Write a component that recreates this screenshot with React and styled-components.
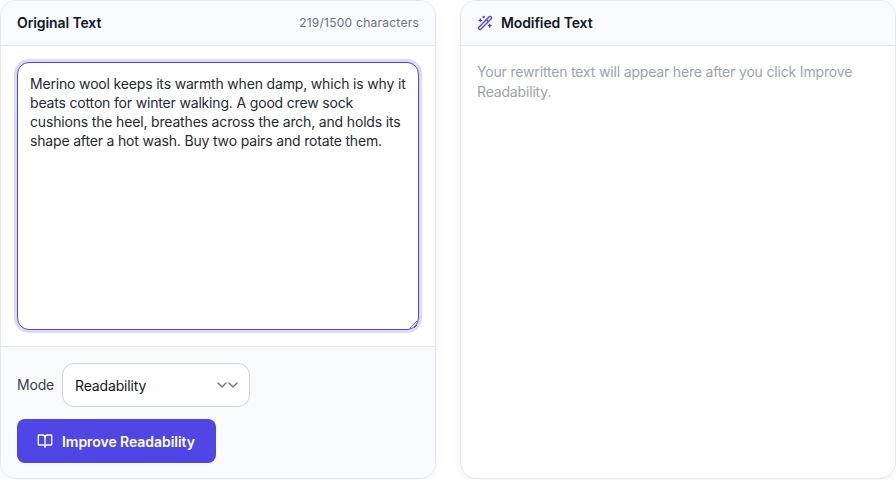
import React from "react";
import styled, { createGlobalStyle } from "styled-components";
import { BookOpen, ChevronDown, WandSparkles } from "lucide-react";

const sampleText =
  "Merino wool keeps its warmth when damp, which is why it beats cotton for winter walking. A good crew sock cushions the heel, breathes across the arch, and holds its shape after a hot wash. Buy two pairs and rotate them.";

const GlobalStyle = createGlobalStyle`
  html, body {
    margin: 0;
    padding: 0;
    background: #ffffff;
  }

  * {
    box-sizing: border-box;
  }
`;

const App = () => {
  return (
    <Page>
      <GlobalStyle />
      <Panel>
        <PanelHeader>
          <PanelTitle>Original Text</PanelTitle>
          <CharCount>219/1500 characters</CharCount>
        </PanelHeader>
        <EditorArea>
          <TextBox value={sampleText} readOnly />
        </EditorArea>
        <PanelFooter>
          <ModeRow>
            <ModeLabel>Mode</ModeLabel>
            <ModeSelect>
              Readability
              <Chevrons>
                <ChevronDown size={16} strokeWidth={2} />
                <ChevronDown size={16} strokeWidth={2} />
              </Chevrons>
            </ModeSelect>
          </ModeRow>
          <PrimaryButton>
            <BookOpen size={16} strokeWidth={2} />
            Improve Readability
          </PrimaryButton>
        </PanelFooter>
      </Panel>
      <Panel>
        <PanelHeader>
          <TitleGroup>
            <WandSparkles size={16} strokeWidth={2} color="#4f46e5" />
            <PanelTitle>Modified Text</PanelTitle>
          </TitleGroup>
        </PanelHeader>
        <Placeholder>
          Your rewritten text will appear here after you click Improve
          Readability.
        </Placeholder>
      </Panel>
    </Page>
  );
};

const Page = styled.div`
  display: grid;
  grid-template-columns: 436px 436px;
  gap: 24px;
  width: 896px;
  height: 480px;
  overflow: hidden;
  font-family: Inter, "Liberation Sans", sans-serif;
  letter-spacing: -0.17px;
`;

const Panel = styled.section`
  display: flex;
  flex-direction: column;
  height: 479px;
  background: #ffffff;
  border: 1px solid #e5e7eb;
  border-radius: 16px;
  box-shadow: 0 1px 12px rgba(0, 0, 0, 0.05);
  overflow: hidden;
`;

const PanelHeader = styled.header`
  display: flex;
  align-items: center;
  justify-content: space-between;
  flex: none;
  height: 45px;
  padding: 0 16px;
  background: #f9fafb;
  border-bottom: 1px solid #e5e7eb;
`;

const TitleGroup = styled.div`
  display: flex;
  align-items: center;
  gap: 8px;
`;

const PanelTitle = styled.h2`
  margin: 0;
  font-size: 14px;
  line-height: 20px;
  font-weight: 600;
  letter-spacing: -0.1px;
  color: #111827;
`;

const CharCount = styled.span`
  font-size: 12px;
  line-height: 16px;
  letter-spacing: 0.25px;
  color: #6b7280;
`;

const EditorArea = styled.div`
  display: flex;
  flex: 1;
  min-height: 0;
  padding: 16px;
`;

const TextBox = styled.textarea`
  display: block;
  width: 100%;
  height: 100%;
  padding: 11px 12px 12px;
  font-family: inherit;
  font-size: 14px;
  line-height: 19px;
  letter-spacing: -0.17px;
  color: #1f2937;
  background: #ffffff;
  border: 1px solid #4f46e5;
  border-radius: 12px;
  outline: none;
  box-shadow: 0 0 0 3px rgba(79, 70, 229, 0.2);
`;

const PanelFooter = styled.footer`
  display: flex;
  flex-direction: column;
  align-items: flex-start;
  flex: none;
  gap: 12px;
  padding: 16px 16px 15px;
  background: #f9fafb;
  border-top: 1px solid #e5e7eb;
`;

const ModeRow = styled.div`
  display: flex;
  align-items: center;
  gap: 8px;
`;

const ModeLabel = styled.span`
  font-size: 14px;
  line-height: 20px;
  color: #374151;
`;

const ModeSelect = styled.div`
  display: flex;
  align-items: center;
  justify-content: space-between;
  width: 188px;
  height: 44px;
  padding: 0 8px 0 12px;
  font-size: 14px;
  color: #111827;
  background: #ffffff;
  border: 1px solid #d1d5db;
  border-radius: 12px;
`;

const Chevrons = styled.span`
  display: flex;
  color: #6b7280;

  svg + svg {
    margin-left: -4.5px;
  }
`;

const PrimaryButton = styled.button`
  display: flex;
  align-items: center;
  gap: 9px;
  height: 44px;
  padding: 0 21px 0 20px;
  font-family: inherit;
  font-size: 14px;
  font-weight: 600;
  letter-spacing: -0.05px;
  color: #ffffff;
  background: #4f46e5;
  border: none;
  border-radius: 8px;
`;

const Placeholder = styled.p`
  margin: 0;
  padding: 16px;
  font-size: 14px;
  line-height: 20px;
  color: #9ca3af;
`;

export default App;
